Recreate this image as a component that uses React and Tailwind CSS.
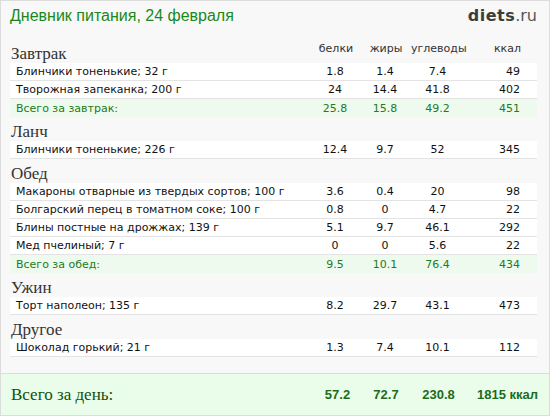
import React from "react";

const sections = [
  {
    name: "Завтрак",
    header: true,
    rows: [
      ["Блинчики тоненькие; 32 г", "1.8", "1.4", "7.4", "49"],
      ["Творожная запеканка; 200 г", "24", "14.4", "41.8", "402"],
    ],
    total: ["Всего за завтрак:", "25.8", "15.8", "49.2", "451"],
  },
  {
    name: "Ланч",
    rows: [["Блинчики тоненькие; 226 г", "12.4", "9.7", "52", "345"]],
  },
  {
    name: "Обед",
    rows: [
      ["Макароны отварные из твердых сортов; 100 г", "3.6", "0.4", "20", "98"],
      ["Болгарский перец в томатном соке; 100 г", "0.8", "0", "4.7", "22"],
      ["Блины постные на дрожжах; 139 г", "5.1", "9.7", "46.1", "292"],
      ["Мед пчелиный; 7 г", "0", "0", "5.6", "22"],
    ],
    total: ["Всего за обед:", "9.5", "10.1", "76.4", "434"],
  },
  {
    name: "Ужин",
    rows: [["Торт наполеон; 135 г", "8.2", "29.7", "43.1", "473"]],
  },
  {
    name: "Другое",
    rows: [["Шоколад горький; 21 г", "1.3", "7.4", "10.1", "112"]],
  },
];

const sans = { fontFamily: '"DejaVu Sans", Verdana, sans-serif' };
const serif = { fontFamily: '"Liberation Serif", "Times New Roman", serif' };

function Row({ r, green }) {
  return (
    <div
      className={
        "flex items-center h-[18px] text-[11px] leading-[17px] " +
        (green
          ? "bg-[#effaef] text-[#237a23]"
          : "bg-white text-[#111] border-b border-[#e3e3e3]")
      }
      style={sans}
    >
      <div className="flex-1 pl-[6px] whitespace-nowrap overflow-hidden">{r[0]}</div>
      <div className="w-[50px] text-center">{r[1]}</div>
      <div className="w-[50px] text-center">{r[2]}</div>
      <div className="w-[55px] text-center">{r[3]}</div>
      <div className="w-[55px] text-right pr-[17px] box-content">{r[4]}</div>
    </div>
  );
}

export default function App() {
  return (
    <div className="w-[550px] h-[416px] border border-[#dcdcdc] bg-[#f8f8f8] flex flex-col overflow-hidden">
      <div className="h-[38px] flex justify-between items-start pl-[9px] pr-[12px] pt-[5px]">
        <div
          className="text-[16px] leading-[20px] text-[#1a881a]"
          style={{ fontFamily: '"Liberation Sans", Arial, sans-serif' }}
        >
          Дневник питания, 24 февраля
        </div>
        <div className="text-[16px] leading-[20px]" style={sans}>
          <span className="font-bold text-[#3c3c3c] tracking-[0.5px]">diets</span>
          <span className="text-[#555]">.ru</span>
        </div>
      </div>
      <div className="pl-[9px] pr-[12px]">
        {sections.map((s) => (
          <div key={s.name}>
            <div className="h-[24px] flex">
              <div
                className="flex-1 self-end text-[17px] leading-[18px] text-[#333] pl-[1px]"
                style={serif}
              >
                {s.name}
              </div>
              {s.header && (
                <div className="flex self-start pt-[3px] text-[11px] leading-[14px] text-[#333]" style={sans}>
                  <div className="w-[50px] text-center">белки</div>
                  <div className="w-[50px] text-center">жиры</div>
                  <div className="w-[55px] text-center">углеводы</div>
                  <div className="w-[55px] text-right pr-[16px] box-content">ккал</div>
                </div>
              )}
            </div>
            {s.rows.map((r, i) => (
              <Row key={i} r={r} />
            ))}
            {s.total && <Row r={s.total} green />}
          </div>
        ))}
      </div>
      <div className="mt-auto h-[42px] border-t border-[#dcdcdc] bg-[#eafdea] flex items-center pl-[10px] pr-[11px]">
        <div className="flex-1 text-[17px] text-[#0c520c]" style={serif}>
          Всего за день:
        </div>
        <div
          className="flex font-bold text-[13px] text-[#1d6b1d]"
          style={{ fontFamily: '"Liberation Sans", Arial, sans-serif' }}
        >
          <div className="w-[50px] text-center pl-[3px]">57.2</div>
          <div className="w-[50px] text-center">72.7</div>
          <div className="w-[55px] text-center">230.8</div>
          <div className="w-[72px] text-right">1815 ккал</div>
        </div>
      </div>
    </div>
  );
}
